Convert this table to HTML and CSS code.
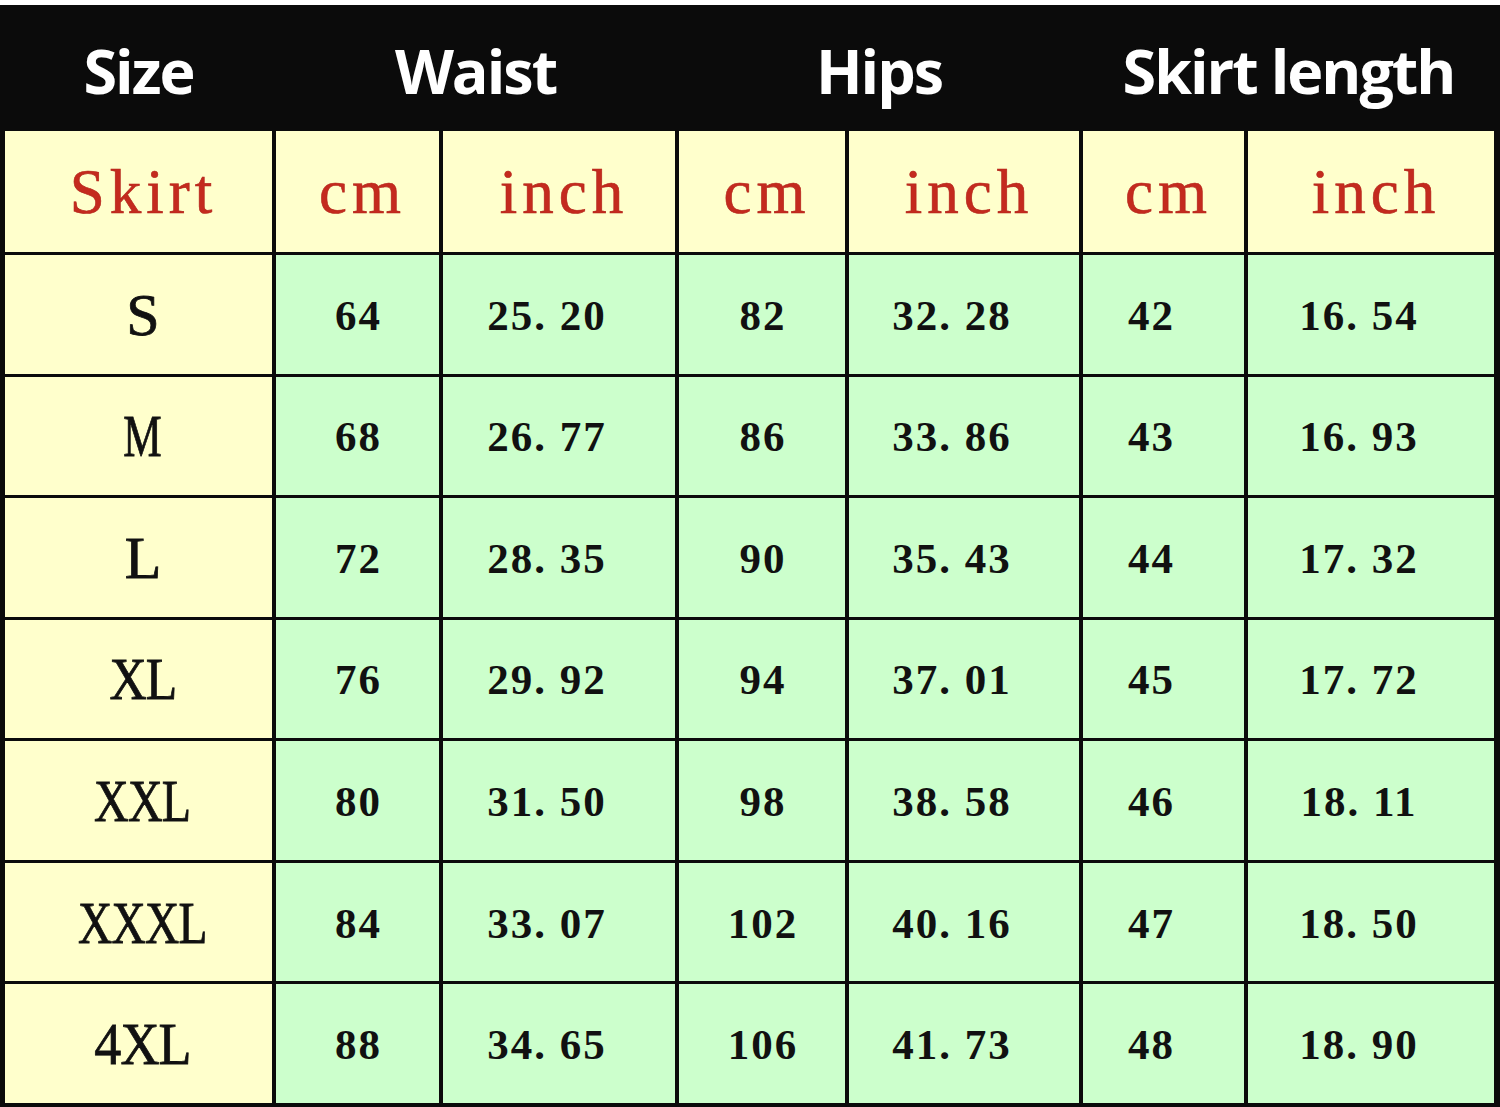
FILE: index.html
```html
<!DOCTYPE html>
<html lang="en">
<head>
<meta charset="utf-8">
<title>Skirt size chart</title>
<link rel="stylesheet" href="styles.css">
</head>
<body>
<div class="chart">
  <div class="h">Size</div>
  <div class="h span2">Waist</div>
  <div class="h span2">Hips</div>
  <div class="h span2">Skirt length</div>

  <div class="u">Skirt</div>
  <div class="u">cm</div>
  <div class="u">inch</div>
  <div class="u">cm</div>
  <div class="u">inch</div>
  <div class="u">cm</div>
  <div class="u">inch</div>

  <div class="sz"><span class="w-s">S</span></div>
  <div class="v">64</div><div class="v sh">25. 20</div>
  <div class="v">82</div><div class="v sh">32. 28</div>
  <div class="v sh">42</div><div class="v sh">16. 54</div>

  <div class="sz"><span class="w-m">M</span></div>
  <div class="v">68</div><div class="v sh">26. 77</div>
  <div class="v">86</div><div class="v sh">33. 86</div>
  <div class="v sh">43</div><div class="v sh">16. 93</div>

  <div class="sz"><span class="w-l">L</span></div>
  <div class="v">72</div><div class="v sh">28. 35</div>
  <div class="v">90</div><div class="v sh">35. 43</div>
  <div class="v sh">44</div><div class="v sh">17. 32</div>

  <div class="sz"><span class="w-xl">XL</span></div>
  <div class="v">76</div><div class="v sh">29. 92</div>
  <div class="v">94</div><div class="v sh">37. 01</div>
  <div class="v sh">45</div><div class="v sh">17. 72</div>

  <div class="sz"><span class="w-xxl">XXL</span></div>
  <div class="v">80</div><div class="v sh">31. 50</div>
  <div class="v">98</div><div class="v sh">38. 58</div>
  <div class="v sh">46</div><div class="v sh">18. 11</div>

  <div class="sz"><span class="w-xxxl">XXXL</span></div>
  <div class="v">84</div><div class="v sh">33. 07</div>
  <div class="v">102</div><div class="v sh">40. 16</div>
  <div class="v sh">47</div><div class="v sh">18. 50</div>

  <div class="sz"><span class="w-4xl">4XL</span></div>
  <div class="v">88</div><div class="v sh">34. 65</div>
  <div class="v">106</div><div class="v sh">41. 73</div>
  <div class="v sh">48</div><div class="v sh">18. 90</div>
</div>
</body>
</html>
```

FILE: styles.css
```css
html, body {
  margin: 0;
  padding: 0;
  background: #ffffff;
}

body {
  padding-top: 5px;
  width: 1500px;
  height: 1107px;
  box-sizing: border-box;
  overflow: hidden;
}

.chart {
  width: 1500px;
  height: 1102px;
  box-sizing: border-box;
  padding: 0 6px 4px 5px;
  background: #0b0b0b;
  display: grid;
  grid-template-columns: 267px 163px 232px 166px 230px 161px 246px;
  grid-template-rows: 123px 121px repeat(7, 1fr);
  column-gap: 4px;
  row-gap: 3px;
}

.h {
  background: #0b0b0b;
  color: #ffffff;
  font-family: "Open Sans", "Noto Sans", sans-serif;
  font-weight: 700;
  font-size: 61px;
  letter-spacing: -2px;
  display: flex;
  align-items: center;
  justify-content: center;
  padding-top: 8px;
  box-sizing: border-box;
  margin-right: -4px;
  padding-right: 4px;
}

.span2 {
  grid-column: span 2;
}

.u {
  background: #ffffcc;
  color: #c42a1e;
  font-family: "Liberation Serif", "Times New Roman", serif;
  font-size: 63px;
  letter-spacing: 5px;
  -webkit-text-stroke: 0.6px #b3261b;
  display: flex;
  align-items: center;
  justify-content: center;
  padding-left: 10px;
  padding-top: 2px;
  box-sizing: border-box;
}

.sz {
  background: #ffffcc;
  color: #111111;
  font-family: "Liberation Serif", "Times New Roman", serif;
  font-size: 60px;
  -webkit-text-stroke: 0.8px #111111;
  display: flex;
  align-items: center;
  justify-content: center;
  padding-left: 8px;
  padding-top: 2px;
  box-sizing: border-box;
}

.sz span {
  display: inline-block;
  letter-spacing: -1px;
}

.sz .w-m { transform: scaleX(0.72); }
.sz .w-xl { transform: scaleX(0.86); }
.sz .w-xxl { transform: scaleX(0.8); }
.sz .w-xxxl { transform: scaleX(0.79); }
.sz .w-4xl { transform: scaleX(0.9); }

.v {
  background: #ccffcc;
  color: #111111;
  font-family: "Liberation Serif", "Times New Roman", serif;
  font-weight: 700;
  font-size: 43px;
  letter-spacing: 2px;
  display: flex;
  align-items: center;
  justify-content: center;
  padding-left: 2px;
  padding-top: 2px;
  box-sizing: border-box;
}

.v.sh {
  padding-left: 0;
  padding-right: 24px;
}
```
